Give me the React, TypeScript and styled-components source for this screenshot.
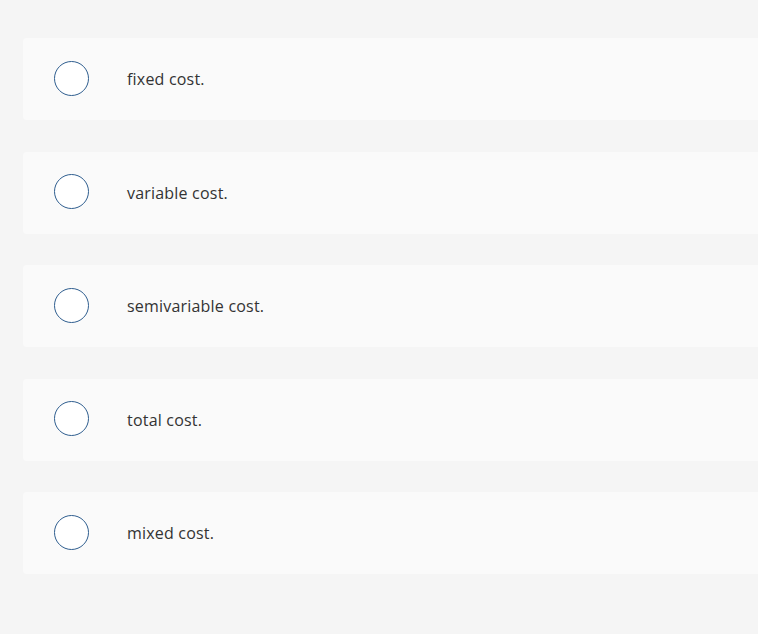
import React from 'react';
import styled, { createGlobalStyle } from 'styled-components';

const GlobalStyle = createGlobalStyle`
  html, body {
    margin: 0;
    padding: 0;
    background: #f5f5f5;
    overflow: hidden;
  }
  body {
    font-family: "Open Sans", "Liberation Sans", sans-serif;
  }
`;

const options = [
  'fixed cost.',
  'variable cost.',
  'semivariable cost.',
  'total cost.',
  'mixed cost.',
];

const App = () => {
  return (
    <>
      <GlobalStyle />
      <Page>
        <ChoiceList>
          {options.map((label) => (
            <Choice key={label}>
              <Radio />
              <Label>{label}</Label>
            </Choice>
          ))}
        </ChoiceList>
      </Page>
    </>
  );
};

export default App;

const Page = styled.main`
  width: 758px;
  height: 634px;
  padding: 38px 0 0 23px;
  box-sizing: border-box;
  overflow: hidden;
`;

const ChoiceList = styled.div`
  display: flex;
  flex-direction: column;
  gap: 31.5px;
  margin-right: -20px;
`;

const Choice = styled.label`
  display: flex;
  align-items: center;
  height: 82px;
  padding: 0 0 2px 31px;
  box-sizing: border-box;
  background: #fafafa;
  border-radius: 4px;
  cursor: pointer;
`;

const Radio = styled.span`
  flex: none;
  width: 35px;
  height: 35px;
  box-sizing: border-box;
  border: 1.5px solid #2f5e8f;
  border-radius: 50%;
  background: #ffffff;
`;

const Label = styled.span`
  margin: 2px 0 0 38px;
  font-size: 16px;
  line-height: 20px;
  letter-spacing: 0.2px;
  color: #333333;
`;
